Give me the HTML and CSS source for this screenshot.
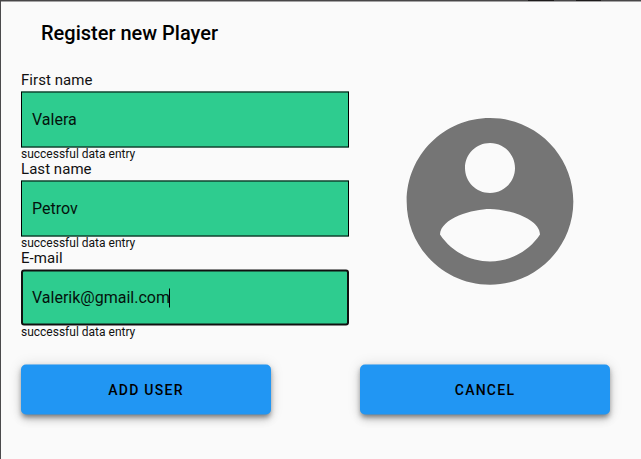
FILE: index.html
```html
<!DOCTYPE html>
<html lang="en">
<head>
<meta charset="utf-8">
<title>Register new Player</title>
<link rel="stylesheet" href="styles.css">
</head>
<body>
<div class="backdrop"></div>
<main class="dialog">
  <h1 class="title">Register new Player</h1>
  <div class="content">
    <div class="fields">
      <div class="group">
        <label class="label">First name</label>
        <div class="field"><span class="value">Valera</span></div>
        <div class="hint">successful data entry</div>
      </div>
      <div class="group">
        <label class="label">Last name</label>
        <div class="field"><span class="value">Petrov</span></div>
        <div class="hint">successful data entry</div>
      </div>
      <div class="group">
        <label class="label">E-mail</label>
        <div class="field field-focused"><span class="value">Valerik@gmail.com</span><span class="caret"></span></div>
        <div class="hint">successful data entry</div>
      </div>
    </div>
    <svg class="avatar" viewBox="0 0 24 24" aria-hidden="true">
      <path d="M12 2C6.48 2 2 6.48 2 12s4.48 10 10 10 10-4.48 10-10S17.52 2 12 2zm0 3c1.66 0 3 1.34 3 3s-1.34 3-3 3-3-1.34-3-3 1.34-3 3-3zm0 14.2c-2.5 0-4.71-1.28-6-3.22.03-1.99 4-3.08 6-3.08 1.99 0 5.97 1.09 6 3.08-1.29 1.94-3.5 3.22-6 3.22z"/>
    </svg>
  </div>
  <div class="actions">
    <button class="button" type="button">ADD USER</button>
    <button class="button" type="button">CANCEL</button>
  </div>
</main>
</body>
</html>
```
FILE: styles.css
```css
* {
  box-sizing: border-box;
}

body {
  margin: 0;
  height: 459px;
  overflow: hidden;
  font-family: Roboto, "Liberation Sans", sans-serif;
  color: #000;
  background: #fafafa;
}

.backdrop {
  height: 1px;
  background: linear-gradient(90deg, #474647 528px, #1c1a1b 528px 554px, #474647 554px 576px, #1c1a1b 576px 601px, #474647 601px);
}

.dialog {
  height: 458px;
  padding: 0 0 0 20px;
  border-left: 1px solid #4b4a4c;
  box-shadow: inset 0 1px 0 #a3a2a3;
}

.title {
  margin: 0;
  padding: 16px 20px 0;
  height: 69px;
  font-size: 20px;
  font-weight: 500;
  line-height: 32px;
}

.content {
  display: flex;
  height: 294px;
}

.fields {
  width: 328px;
}

.group {
  height: 89px;
}

.label {
  display: block;
  height: 21px;
  font-size: 15px;
  line-height: 20px;
  letter-spacing: 0.05px;
  color: #111;
}

.field {
  display: flex;
  align-items: center;
  height: 56px;
  padding: 0 10px;
  border: 1px solid #000;
  background: #2ecc8f;
  transform: translateY(0.5px);
}

.field-focused {
  padding: 0 9px;
  border: 2px solid #101010;
  border-radius: 3px;
}

.value {
  font-size: 16px;
  line-height: 20px;
  color: #04120c;
}

.caret {
  width: 1px;
  height: 19px;
  margin-left: -1px;
  background: #000;
}

.hint {
  height: 12px;
  font-size: 12px;
  line-height: 14px;
  color: #111;
}

.avatar {
  width: 200px;
  height: 200px;
  margin: 31px 0 0 41px;
  fill: #757575;
  transform: translateY(0.4px);
}

.actions {
  display: flex;
  gap: 89px;
}

.button {
  width: 250px;
  height: 50px;
  padding: 0;
  border: 0;
  border-radius: 5px;
  background: #2196f3;
  color: #000;
  font-family: inherit;
  font-size: 14px;
  font-weight: 500;
  letter-spacing: 1.25px;
  box-shadow: 0 3px 5px -1px rgba(0, 0, 0, 0.4), 0 5px 8px rgba(0, 0, 0, 0.14), 0 1px 14px rgba(0, 0, 0, 0.12);
  transform: translateY(0.5px);
}
```
